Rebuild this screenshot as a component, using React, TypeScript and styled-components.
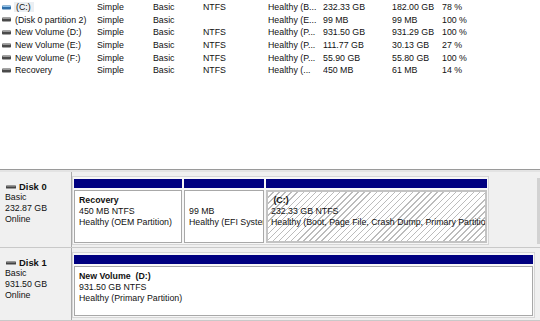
import React from "react";
import styled, { createGlobalStyle } from "styled-components";

const GlobalStyle = createGlobalStyle`
  html, body {
    margin: 0;
    padding: 0;
    background: #fff;
    font-family: "Liberation Sans", Arial, sans-serif;
  }
`;

const Window = styled.div`
  width: 540px;
  height: 321px;
  overflow: hidden;
  display: flex;
  flex-direction: column;
`;

const ListPane = styled.div`
  height: 169px;
  padding-top: 1px;
  background: #fff;
  box-sizing: border-box;
`;

const ListRow = styled.div`
  display: grid;
  grid-template-columns: 13px 84px 56px 50px 65px 55px 69px 50px 1fr;
  height: 12.6px;
  align-items: center;
  font-size: 8.8px;
  color: #111;
  white-space: nowrap;
`;

const Cell = styled.div`
  overflow: hidden;
`;

const NameCell = styled.div<{ $focused?: boolean }>`
  overflow: hidden;
  span {
    padding: 1px 3px 1px 2px;
    margin-left: ${(p) => (p.$focused ? "1px" : "0")};
    background: ${(p) => (p.$focused ? "#ebeff3" : "transparent")};
  }
`;

const IconWrap = styled.div`
  display: flex;
  align-items: center;
  padding-left: 2px;
`;

const Splitter = styled.div`
  height: 2px;
  border-top: 1px solid #9a9a9a;
  background: #e3e3e3;
`;

const BottomPane = styled.div`
  flex: 1;
  background: #f0f0f0;
  display: flex;
  flex-direction: column;
`;

const DiskRow = styled.div<{ $height: number }>`
  display: flex;
  height: ${(p) => p.$height}px;
  border-bottom: 1px solid #c9c9c9;
  position: relative;
`;

const DiskLabel = styled.div`
  width: 72px;
  border-right: 1px solid #a9a9a9;
  padding: 9px 0 0 5px;
  box-sizing: border-box;
  font-size: 8.8px;
  line-height: 11px;
  color: #111;
`;

const DiskTitle = styled.div`
  display: flex;
  align-items: center;
  gap: 3px;
  margin-left: 1px;
  font-weight: bold;
  font-size: 9.4px;
`;

const Frame = styled.div<{ $width: number }>`
  width: ${(p) => p.$width}px;
  margin: 4px 0 2px 0;
  border: 1px solid #d6d6d6;
  background: #f7f7f7;
  padding: 2px 1px 1px 1px;
  display: flex;
  gap: 2px;
  box-sizing: border-box;
`;

const Partition = styled.div<{ $width?: number }>`
  display: flex;
  flex-direction: column;
  min-width: 0;
  width: ${(p) => (p.$width ? `${p.$width}px` : "auto")};
  flex: ${(p) => (p.$width ? "none" : "1")};
`;

const Bar = styled.div`
  height: 9px;
  background: #000080;
`;

const Box = styled.div<{ $selected?: boolean }>`
  flex: 1;
  margin-top: 2px;
  border: ${(p) => (p.$selected ? "2px solid #c3c3c3" : "1px solid #a8a8a8")};
  background: ${(p) =>
    p.$selected
      ? "repeating-linear-gradient(135deg, #fff 0 3.3px, #bcbcbc 3.3px 4.3px)"
      : "#fff"};
  padding: ${(p) => (p.$selected ? "3px 3px" : "4px 4px")};
  font-size: 8.8px;
  line-height: 11px;
  color: #111;
  white-space: nowrap;
  overflow: hidden;
`;

const Bold = styled.div`
  font-weight: bold;
`;

const ScrollStub = styled.div`
  position: absolute;
  right: 0;
  top: 6px;
  width: 3px;
  height: 66px;
  background: #d2d2d2;
`;

const VolumeIcon = ({ blue }: { blue?: boolean }) => (
  <svg width="9" height="5" viewBox="0 0 9 5">
    <rect x="0" y="0.5" width="9" height="4" rx="0.8" fill={blue ? "#2f6ea8" : "#4a4a4a"} />
    <rect x="0.5" y="1" width="8" height="1" fill={blue ? "#8fc2ea" : "#9a9a9a"} />
  </svg>
);

const DiskIcon = () => (
  <svg width="10" height="4" viewBox="0 0 10 4">
    <rect x="0" y="0.5" width="10" height="3" rx="0.6" fill="#444" />
    <rect x="0.5" y="0.8" width="9" height="0.9" fill="#8c8c8c" />
  </svg>
);

const volumes = [
  ["(C:)", "Simple", "Basic", "NTFS", "Healthy (B...", "232.33 GB", "182.00 GB", "78 %"],
  ["(Disk 0 partition 2)", "Simple", "Basic", "", "Healthy (E...", "99 MB", "99 MB", "100 %"],
  ["New Volume (D:)", "Simple", "Basic", "NTFS", "Healthy (P...", "931.50 GB", "931.29 GB", "100 %"],
  ["New Volume (E:)", "Simple", "Basic", "NTFS", "Healthy (P...", "111.77 GB", "30.13 GB", "27 %"],
  ["New Volume (F:)", "Simple", "Basic", "NTFS", "Healthy (P...", "55.90 GB", "55.80 GB", "100 %"],
  ["Recovery", "Simple", "Basic", "NTFS", "Healthy (...", "450 MB", "61 MB", "14 %"],
];

export default function App() {
  return (
    <Window>
      <GlobalStyle />
      <ListPane>
        {volumes.map((v, i) => (
          <ListRow key={v[0]}>
            <IconWrap>
              <VolumeIcon blue={i === 0} />
            </IconWrap>
            <NameCell $focused={i === 0}>
              <span>{v[0]}</span>
            </NameCell>
            {v.slice(1).map((c, j) => (
              <Cell key={j}>{c}</Cell>
            ))}
          </ListRow>
        ))}
      </ListPane>
      <Splitter />
      <BottomPane>
        <DiskRow $height={75}>
          <DiskLabel>
            <DiskTitle>
              <DiskIcon />
              Disk 0
            </DiskTitle>
            <div>Basic</div>
            <div>232.87 GB</div>
            <div>Online</div>
          </DiskLabel>
          <Frame $width={417}>
            <Partition $width={108}>
              <Bar />
              <Box>
                <Bold>Recovery</Bold>
                <div>450 MB NTFS</div>
                <div>Healthy (OEM Partition)</div>
              </Box>
            </Partition>
            <Partition $width={80}>
              <Bar />
              <Box>
                <div>&nbsp;</div>
                <div>99 MB</div>
                <div>Healthy (EFI System Partition)</div>
              </Box>
            </Partition>
            <Partition>
              <Bar />
              <Box $selected>
                <Bold>&nbsp;(C:)</Bold>
                <div>232.33 GB NTFS</div>
                <div>Healthy (Boot, Page File, Crash Dump, Primary Partition)</div>
              </Box>
            </Partition>
          </Frame>
          <ScrollStub />
        </DiskRow>
        <DiskRow $height={72}>
          <DiskLabel>
            <DiskTitle>
              <DiskIcon />
              Disk 1
            </DiskTitle>
            <div>Basic</div>
            <div>931.50 GB</div>
            <div>Online</div>
          </DiskLabel>
          <Frame $width={463}>
            <Partition>
              <Bar />
              <Box>
                <Bold>New Volume &nbsp;(D:)</Bold>
                <div>931.50 GB NTFS</div>
                <div>Healthy (Primary Partition)</div>
              </Box>
            </Partition>
          </Frame>
        </DiskRow>
      </BottomPane>
    </Window>
  );
}
